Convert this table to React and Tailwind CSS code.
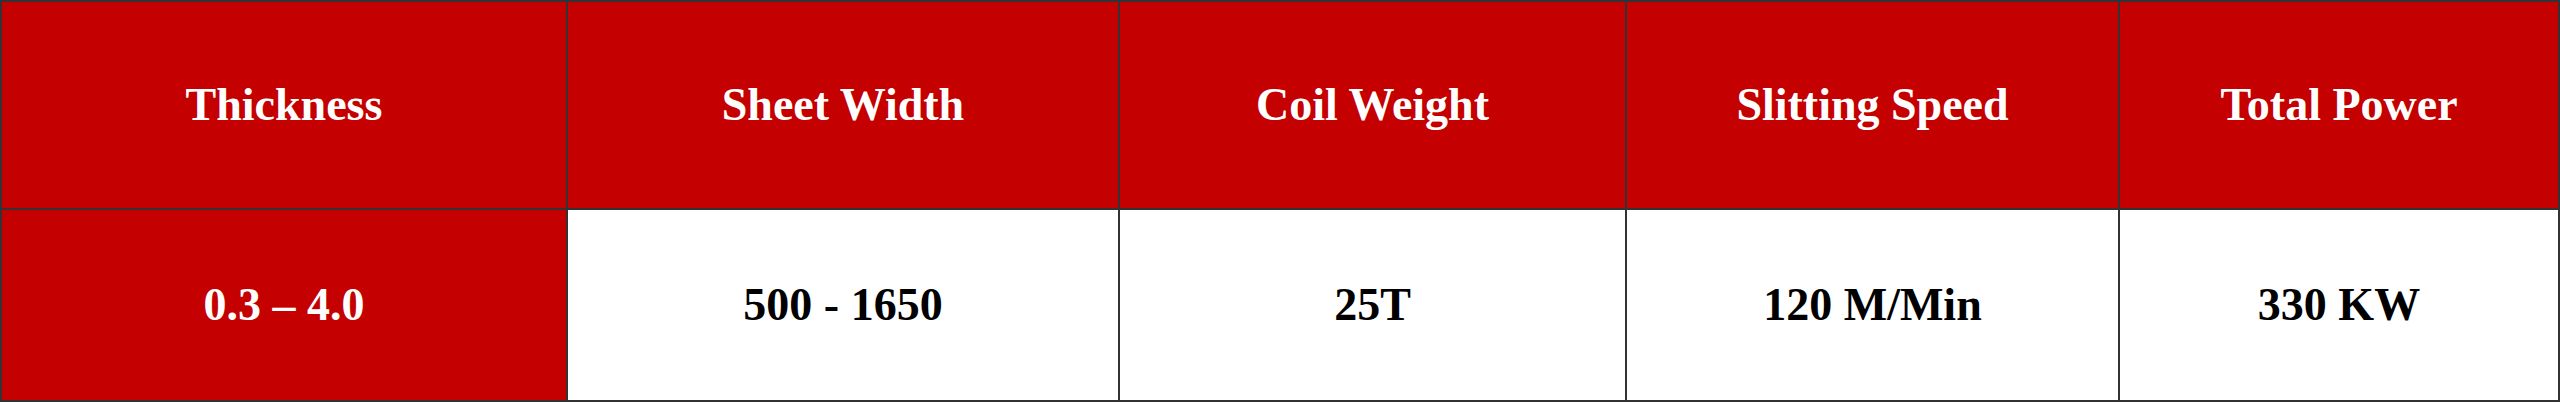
import React from "react";

const headers = ["Thickness", "Sheet Width", "Coil Weight", "Slitting Speed", "Total Power"];
const values = ["0.3 – 4.0", "500 - 1650", "25T", "120 M/Min", "330 KW"];
const widths = ["w-[566px]", "w-[552px]", "w-[507px]", "w-[493px]", "w-[440px]"];

const App = () => {
  return (
    <div className="w-[2560px] h-[403px] bg-white">
      <table
        className="w-[2558px] table-fixed border-collapse font-bold text-[46px] leading-none"
        style={{ fontFamily: '"Liberation Serif", "Times New Roman", serif' }}
      >
        <colgroup>
          {widths.map((w, i) => (
            <col key={i} className={w} />
          ))}
        </colgroup>
        <tbody>
          <tr className="h-[208px]">
            {headers.map((h) => (
              <td
                key={h}
                className="border-2 border-[#333333] bg-[#c40000] text-white text-center align-middle"
              >
                {h}
              </td>
            ))}
          </tr>
          <tr className="h-[192px]">
            {values.map((v, i) => (
              <td
                key={v}
                className={
                  i === 0
                    ? "border-2 border-[#333333] bg-[#c40000] text-white text-center align-middle"
                    : "border-2 border-[#333333] bg-white text-black text-center align-middle"
                }
              >
                {v}
              </td>
            ))}
          </tr>
        </tbody>
      </table>
    </div>
  );
};

export default App;
